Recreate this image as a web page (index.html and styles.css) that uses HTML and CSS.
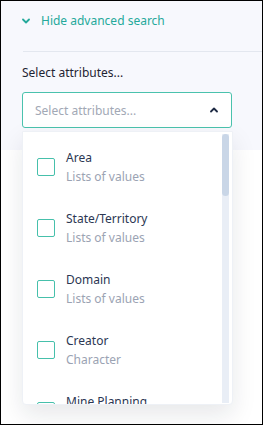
FILE: index.html
```html
<!DOCTYPE html>
<html lang="en">
<head>
  <meta charset="UTF-8" />
  <meta name="viewport" content="width=device-width, initial-scale=1.0" />
  <title>Advanced search</title>
  <link rel="stylesheet" href="styles.css">
</head>
<body>
  <div class="frame">
    <div class="panel">
      <div class="toggle">
        <svg class="chev" width="8" height="6" viewBox="0 0 8 6">
          <path d="M1 1.5 L4 4.5 L7 1.5" fill="none" stroke="#25a99b" stroke-width="1.8" stroke-linecap="round" stroke-linejoin="round"/>
        </svg>
        <span>Hide advanced search</span>
      </div>
      <div class="divider"></div>
      <div class="field">
        <label class="label">Select attributes...</label>
        <div class="select">
          <span class="placeholder">Select attributes...</span>
          <svg class="chev" width="8" height="6" viewBox="0 0 8 6">
            <path d="M1 4.5 L4 1.5 L7 4.5" fill="none" stroke="#1e2a44" stroke-width="1.8" stroke-linecap="round" stroke-linejoin="round"/>
          </svg>
        </div>
        <div class="menu">
          <ul class="options">
            <li class="option">
              <span class="box"></span>
              <div>
                <div class="title">Area</div>
                <div class="sub">Lists of values</div>
              </div>
            </li>
            <li class="option">
              <span class="box"></span>
              <div>
                <div class="title">State/Territory</div>
                <div class="sub">Lists of values</div>
              </div>
            </li>
            <li class="option">
              <span class="box"></span>
              <div>
                <div class="title">Domain</div>
                <div class="sub">Lists of values</div>
              </div>
            </li>
            <li class="option">
              <span class="box"></span>
              <div>
                <div class="title">Creator</div>
                <div class="sub">Character</div>
              </div>
            </li>
            <li class="option">
              <span class="box"></span>
              <div>
                <div class="title">Mine Planning</div>
                <div class="sub">Lists of values</div>
              </div>
            </li>
          </ul>
          <div class="scrollbar"><div class="thumb"></div></div>
        </div>
      </div>
    </div>
  </div>
</body>
</html>
```

FILE: styles.css
```css
* {
  box-sizing: border-box;
}
body {
  margin: 0;
  font-family: "Noto Sans", "Open Sans", sans-serif;
  font-size: 12px;
  background: #fff;
}
.frame {
  width: 263px;
  height: 425px;
  border: 1px solid #000;
  overflow: hidden;
  background: #fff;
}
.panel {
  background: #f7f8fd;
  height: 149px;
  padding-left: 21px;
}
.toggle {
  display: flex;
  align-items: center;
  height: 38px;
  padding-top: 1px;
  color: #25a99b;
}
.toggle .chev {
  margin-right: 11px;
}
.divider {
  margin-top: 12px;
  margin-left: 1px;
  height: 1px;
  background: #e3e7ef;
}
.field {
  position: relative;
  padding-top: 12px;
}
.label {
  display: block;
  color: #1f2433;
  line-height: 17px;
}
.select {
  margin-top: 11px;
  width: 210px;
  height: 36px;
  border: 1px solid #4ac2ad;
  border-radius: 3px;
  background: #fff;
  display: flex;
  align-items: center;
  justify-content: space-between;
  padding: 0 13px 0 12px;
}
.placeholder {
  color: #a2a8b5;
}
.menu {
  position: absolute;
  left: 0;
  top: 79px;
  width: 211px;
  height: 274px;
  background: #fff;
  border: 1px solid #eef1f6;
  border-radius: 0 0 4px 4px;
  box-shadow: 0 10px 24px rgba(20, 30, 50, 0.10);
  display: flex;
  overflow: hidden;
}
.options {
  list-style: none;
  margin: 0;
  padding: 4px 0 0 0;
  flex: 1;
}
.option {
  display: flex;
  align-items: center;
  height: 61px;
  padding-left: 14px;
}
.box {
  width: 18px;
  height: 18px;
  border: 1.5px solid #46c0ab;
  border-radius: 2px;
  margin-right: 11px;
  flex-shrink: 0;
}
.title {
  color: #2c3753;
  line-height: 19px;
}
.sub {
  color: #9ba3b3;
  line-height: 19px;
}
.scrollbar {
  width: 7px;
  margin: 2px 3px 1px 0;
  background: #e9eef6;
}
.thumb {
  height: 62px;
  background: #c9d6e7;
  border-radius: 4px;
}
```
